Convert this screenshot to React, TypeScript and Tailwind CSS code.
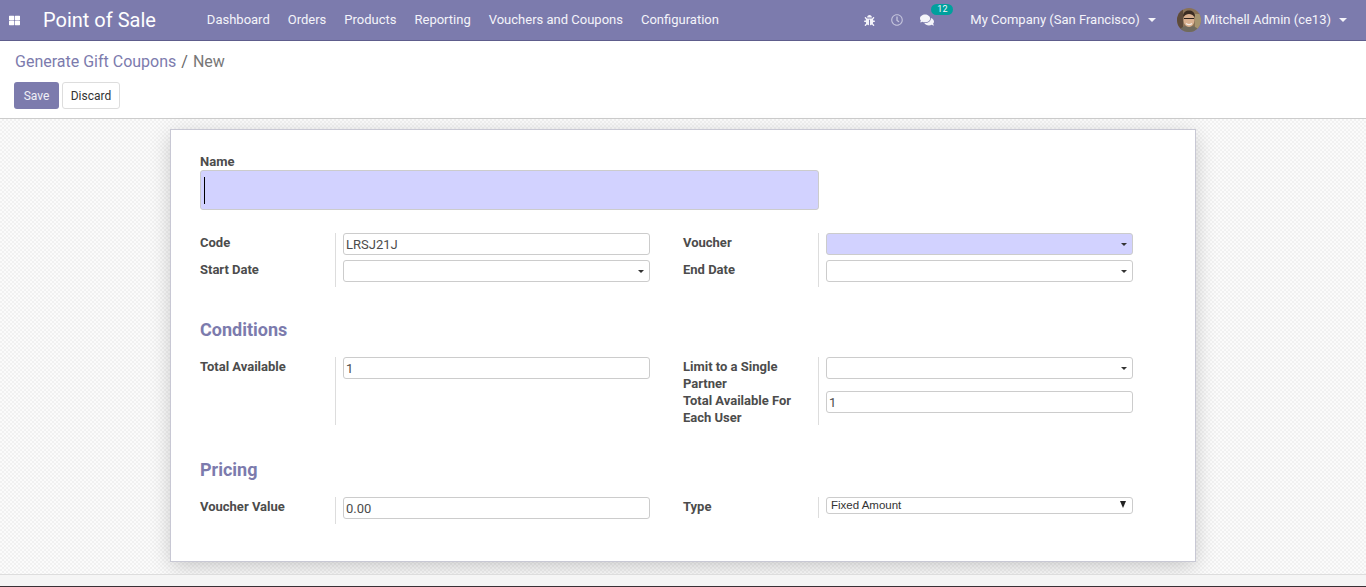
import { FaBug, FaComments, FaRegClock, FaThLarge } from "react-icons/fa"

const menus = ["Dashboard", "Orders", "Products", "Reporting", "Vouchers and Coupons", "Configuration"]

function Caret() {
  return <span className="ml-2 inline-block h-0 w-0 border-x-4 border-t-4 border-x-transparent border-t-current" />
}

function Avatar() {
  return (
    <svg width="24" height="24" viewBox="0 0 24 24" className="rounded-full">
      <rect width="24" height="24" fill="#8a7256" />
      <rect x="0" y="0" width="6" height="24" fill="#5d4a3a" />
      <rect x="18" y="6" width="6" height="18" fill="#a5946f" />
      <path d="M2 24c1-5 5-6 10-6s9 1 10 6z" fill="#6f6a5e" />
      <ellipse cx="12" cy="12" rx="5.5" ry="7" fill="#d9b08f" />
      <path d="M6 9c0-5 3-6.500 6-6.500s6 1.500 6 6.500c-2-2-4-3-6-3s-4 1-6 3z" fill="#3a2c22" />
      <path d="M7 10.500h10" stroke="#2b211b" strokeWidth="1" />
      <path d="M9 15.500c2 1.500 4 1.500 6 0" stroke="#f3ece4" strokeWidth="1.200" fill="none" />
    </svg>
  )
}

function Label({ children }: { children: React.ReactNode }) {
  return <div className="w-[135px] pr-4 text-[13px] leading-[17px] font-bold text-[#4c4c4c]">{children}</div>
}

function TextBox({ value = "", tall = false, required = false, select = false }: { value?: string; tall?: boolean; required?: boolean; select?: boolean }) {
  return (
    <div className={`relative flex h-[22px] w-[307px] items-center rounded-[3px] border border-[#ccc] px-[2px] text-[13px] text-[#4c4c4c] ${required ? "bg-[#d2d2ff]" : "bg-white"} ${tall ? "" : ""}`}>
      <span className="relative top-px">{value}</span>
      {select && <span className="absolute top-[9px] right-[5px] h-0 w-0 border-x-[3.500px] border-t-[3.500px] border-x-transparent border-t-[#333]" />}
    </div>
  )
}

function Divider({ className, children }: { className: string; children: React.ReactNode }) {
  return <div className={`flex flex-col border-l border-[#ddd] pl-[7px] ${className}`}>{children}</div>
}

export default function App() {
  return (
    <div className="flex h-[587px] w-[1366px] flex-col overflow-hidden bg-white font-['Roboto',sans-serif] text-[13px] text-[#4c4c4c]">
      {/* navbar */}
      <nav className="flex h-[41px] shrink-0 items-center border-b border-[#5e5d8c] bg-[#7c7bad] pr-[19px] text-white">
        <FaThLarge className="ml-[9px] text-[11px]" />
        <span className="ml-[23px] text-[20px] leading-none">Point of Sale</span>
        <div className="ml-[51px] flex gap-[18px] text-[#f4f4fa]">
          {menus.map((m) => (
            <span key={m}>{m}</span>
          ))}
        </div>
        <div className="ml-auto flex items-center text-[#f4f4fa]">
          <FaBug className="text-[11px]" />
          <FaRegClock className="ml-[16px] text-[12px] text-[#c4c4dc]" />
          <div className="relative ml-[17px] mr-[29px]">
            <FaComments className="text-[14px]" />
            <span className="absolute top-[-9px] left-[11px] rounded-[6px] bg-[#00a09d] px-[6px] text-[9px] leading-[11px]">12</span>
          </div>
          <span className="ml-[7px]">My Company (San Francisco)</span>
          <Caret />
          <span className="ml-[21px] mr-[3px] flex"><Avatar /></span>
          <span>Mitchell Admin (ce13)</span>
          <Caret />
        </div>
      </nav>

      {/* control panel */}
      <div className="h-[78px] shrink-0 border-b border-[#ccc] px-[14px]">
        <div className="mt-[11px] ml-px text-[16px] leading-[20px] text-[#7c7bad]">
          Generate Gift Coupons<span className="mx-[5px] text-[#666]">/</span><span className="text-[#777]">New</span>
        </div>
        <div className="mt-[10px] flex gap-[3px]">
          <button className="h-[27px] w-[45px] rounded-[3px] bg-[#7c7bad] text-[12px] text-[#f0f0f7]">Save</button>
          <button className="h-[27px] w-[58px] rounded-[3px] border border-[#ddd] bg-white text-[12px] text-[#333]">Discard</button>
        </div>
      </div>

      {/* sheet area */}
      <div className="min-h-0 flex-1 bg-[repeating-conic-gradient(#f1f1f1_0_25%,#fbfbfb_0_50%)] bg-[length:4px_4px] pt-[10px]">
        <div className="mx-auto ml-[170px] h-[433px] w-[1026px] border border-[#c8c8d4] bg-white px-[29px] pt-[24px] shadow-[0_5px_20px_-1px_rgba(0,0,0,0.2)]">
          <div className="text-[13px] leading-[15px] font-bold">Name</div>
          <div className="relative mt-[1px] h-[40px] w-[619px] rounded-[3px] border border-[#ccc] bg-[#d2d2ff]">
            <span className="absolute top-[6px] left-[3px] h-[27px] w-px bg-black" />
          </div>

          <div className="mt-[23px] flex gap-[33px]">
            <div className="flex w-[450px]">
              <div className="flex flex-col">
                <div className="h-[27px] pt-[1px]"><Label>Code</Label></div>
                <div className="h-[27px] pt-[1px]"><Label>Start Date</Label></div>
              </div>
              <Divider className="h-[54px] gap-[5px]">
                <TextBox value="LRSJ21J" />
                <TextBox select />
              </Divider>
            </div>
            <div className="flex w-[450px]">
              <div className="flex flex-col">
                <div className="h-[27px] pt-[1px]"><Label>Voucher</Label></div>
                <div className="h-[27px] pt-[1px]"><Label>End Date</Label></div>
              </div>
              <Divider className="h-[54px] gap-[5px]">
                <TextBox required select />
                <TextBox select />
              </Divider>
            </div>
          </div>

          <h2 className="mt-[33px] text-[18px] leading-[20px] font-bold text-[#7c7bad]">Conditions</h2>
          <div className="mt-[17px] flex gap-[33px]">
            <div className="flex w-[450px]">
              <div className="pt-[1px]"><Label>Total Available</Label></div>
              <Divider className="h-[68px]">
                <TextBox value="1" />
              </Divider>
            </div>
            <div className="flex w-[450px]">
              <div className="flex flex-col pt-[1px]">
                <Label>Limit to a Single Partner</Label>
                <Label>Total Available For Each User</Label>
              </div>
              <Divider className="h-[68px] gap-[12px]">
                <TextBox select />
                <TextBox value="1" />
              </Divider>
            </div>
          </div>

          <h2 className="mt-[34px] text-[18px] leading-[20px] font-bold text-[#7c7bad]">Pricing</h2>
          <div className="mt-[17px] flex gap-[33px]">
            <div className="flex w-[450px]">
              <div className="pt-[1px]"><Label>Voucher Value</Label></div>
              <Divider className="h-[27px]">
                <TextBox value="0.00" />
              </Divider>
            </div>
            <div className="flex w-[450px]">
              <div className="pt-[1px]"><Label>Type</Label></div>
              <Divider className="h-[21px]">
                <div className="relative flex h-[17px] w-[307px] items-center rounded-[3px] border border-[#ccc] bg-white px-1 font-['Liberation_Sans',sans-serif] text-[11.500px] text-[#333]">
                  Fixed Amount
                  <span className="absolute top-[3px] right-[6px] h-0 w-0 border-x-[3.500px] border-t-[7px] border-x-transparent border-t-[#222]" />
                </div>
              </Divider>
            </div>
          </div>
        </div>
      </div>

      {/* footer strip */}
      <div className="h-[13px] shrink-0 border-t border-[#ddd] border-b border-b-[#3a3036] bg-[#f5f5f5]" />
    </div>
  )
}
